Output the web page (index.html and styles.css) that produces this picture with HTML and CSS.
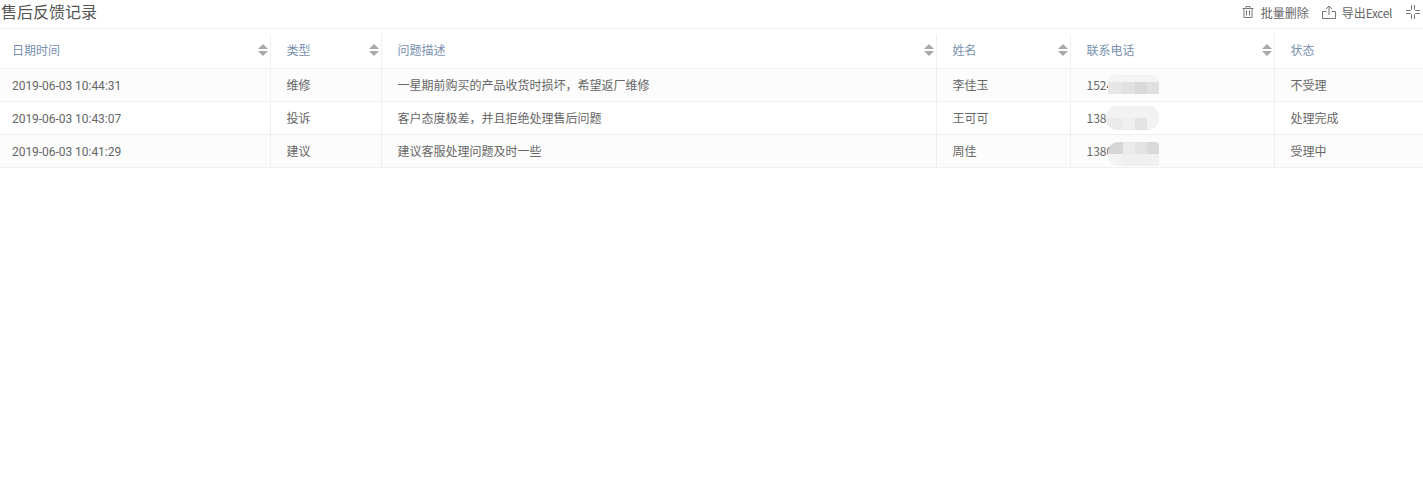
FILE: index.html
```html
<!DOCTYPE html>
<html lang="zh-CN">
<head>
<meta charset="utf-8">
<title>售后反馈记录</title>
<link rel="stylesheet" href="styles.css">
</head>
<body>
<header class="bar">
  <h1 class="title">售后反馈记录</h1>
  <div class="tools">
    <span class="tool">
      <svg class="ico" viewBox="0 0 14 14" width="14" height="14"><path d="M1.500 3.500h11M5 3.500V1.500h4v2M3 3.500v9h8v-9M5.500 5.500v5M8.500 5.500v5" fill="none" stroke="#777" stroke-width="1"/></svg>
      <span>批量删除</span>
    </span>
    <span class="tool">
      <svg class="ico" viewBox="0 0 14 14" width="14" height="14"><path d="M4.500 6.500H.5v7h13v-7H9.500M7 10V1M4 4l3-3 3 3" fill="none" stroke="#777" stroke-width="1"/></svg>
      <span>导出<span class="xl">Excel</span></span>
    </span>
    <svg class="ico shrink" viewBox="0 0 14 14" width="14" height="14"><path d="M5.500 0v4.500l-1 1H0M8.500 0v4.500l1 1H14M5.500 14V9.500l-1-1H0M8.500 14V9.500l1-1H14" fill="none" stroke="#777" stroke-width="1"/></svg>
  </div>
</header>
<div class="wrap">
<table class="grid">
  <colgroup><col class="c1"><col class="c2"><col class="c3"><col class="c4"><col class="c5"><col class="c6"></colgroup>
  <thead>
    <tr>
      <th><span class="head">日期时间<i class="sort"></i></span></th>
      <th><span class="head">类型<i class="sort"></i></span></th>
      <th><span class="head">问题描述<i class="sort"></i></span></th>
      <th><span class="head">姓名<i class="sort"></i></span></th>
      <th><span class="head">联系电话<i class="sort"></i></span></th>
      <th><span class="head">状态<i class="sort"></i></span></th>
    </tr>
  </thead>
  <tbody>
    <tr class="odd">
      <td class="when">2019-06-03 10:44:31</td><td>维修</td><td>一星期前购买的产品收货时损坏，希望返厂维修</td><td>李佳玉</td>
      <td class="phone">1524<span class="blur b1"></span></td><td>不受理</td>
    </tr>
    <tr>
      <td class="when">2019-06-03 10:43:07</td><td>投诉</td><td>客户态度极差，并且拒绝处理售后问题</td><td>王可可</td>
      <td class="phone">138<span class="blur b2"></span></td><td>处理完成</td>
    </tr>
    <tr class="odd">
      <td class="when">2019-06-03 10:41:29</td><td>建议</td><td>建议客服处理问题及时一些</td><td>周佳</td>
      <td class="phone">1380<span class="blur b3"></span></td><td>受理中</td>
    </tr>
  </tbody>
</table>
</div>
</body>
</html>
```
FILE: styles.css
```css
* { box-sizing: border-box; }
html, body { margin: 0; padding: 0; background: #fff; overflow: hidden; }
body { font-family: "Noto Sans CJK SC", Roboto, sans-serif; font-size: 12px; color: #666; }
.bar { display: flex; justify-content: space-between; align-items: center; height: 29px; padding: 0 0 6px 1px; border-bottom: 1px solid #f0f0f0; }
.title { margin: 0; font-size: 16px; font-weight: 400; color: #555; line-height: 22px; }
.tools { display: flex; align-items: center; gap: 13px; margin-right: 3px; padding-top: 2px; color: #666; }
.tool { display: flex; align-items: center; gap: 6px; }
.xl { letter-spacing: -0.4px; }
.ico { display: block; }
.shrink { margin-left: 1px; }
.wrap { overflow: hidden; padding-top: 5px; }
.grid { border-collapse: collapse; table-layout: fixed; width: 1582px; }
.c1 { width: 270px; } .c2 { width: 111px; } .c3 { width: 555px; } .c4 { width: 134px; } .c5 { width: 204px; } .c6 { width: 308px; }
th { height: 34px; padding: 0 0 2px 16px; font-weight: 400; text-align: left; color: #7890ae; border-right: 1px solid #f0f0f0; border-bottom: 1px solid #f0f0f0; }
th:first-child, td:first-child { padding-left: 12px; }
.head { display: flex; justify-content: space-between; align-items: center; }
.sort { position: relative; display: block; width: 11px; height: 12px; margin-right: 1px; }
.sort::before, .sort::after { content: ""; position: absolute; left: 0; border-left: 5.5px solid transparent; border-right: 5.5px solid transparent; }
.sort::before { top: 0; border-bottom: 5px solid #a8a8a8; }
.sort::after { bottom: 0; border-top: 5px solid #a8a8a8; }
td { height: 33px; padding: 0 0 0 16px; line-height: 18px; border-right: 1px solid #f0f0f0; border-bottom: 1px solid #f0f0f0; white-space: nowrap; }
.odd td { background: #fcfcfc; }
.when { font-family: Roboto, sans-serif; letter-spacing: -0.04px; padding-top: 2px; }
.phone { position: relative; }
.blur { position: absolute; left: 37px; width: 51px; }
.b1 { top: 6px; height: 19px; border-radius: 8px 8px 0 0; background:
  linear-gradient(90deg, #e6e6e6 15px, #e1e1e1 15px 27px, #d9d9d9 27px 39px, #e0e0e0 39px) 0 100% / 100% 12px no-repeat,
  #f4f4f4; }
.b2 { top: 4px; left: 35px; width: 53px; height: 24px; border-radius: 11px; background:
  linear-gradient(90deg, #ebebeb 17px, #f0f0f0 17px 29px, #e3e3e3 29px 41px, #f3f3f3 41px) 0 100% / 100% 12px no-repeat,
  #f2f2f2; }
.b3 { top: 7px; height: 24px; border-radius: 10px 4px 0 10px; background:
  linear-gradient(90deg, #d6d6d6 15px, #ebebeb 15px 27px, #e3e3e3 27px 39px, #d9d9d9 39px) 0 0 / 100% 12px no-repeat,
  linear-gradient(90deg, #f3f3f3 15px, #efefef 15px 39px, #f0f0f0 39px) 0 100% / 100% 12px no-repeat; }
```
